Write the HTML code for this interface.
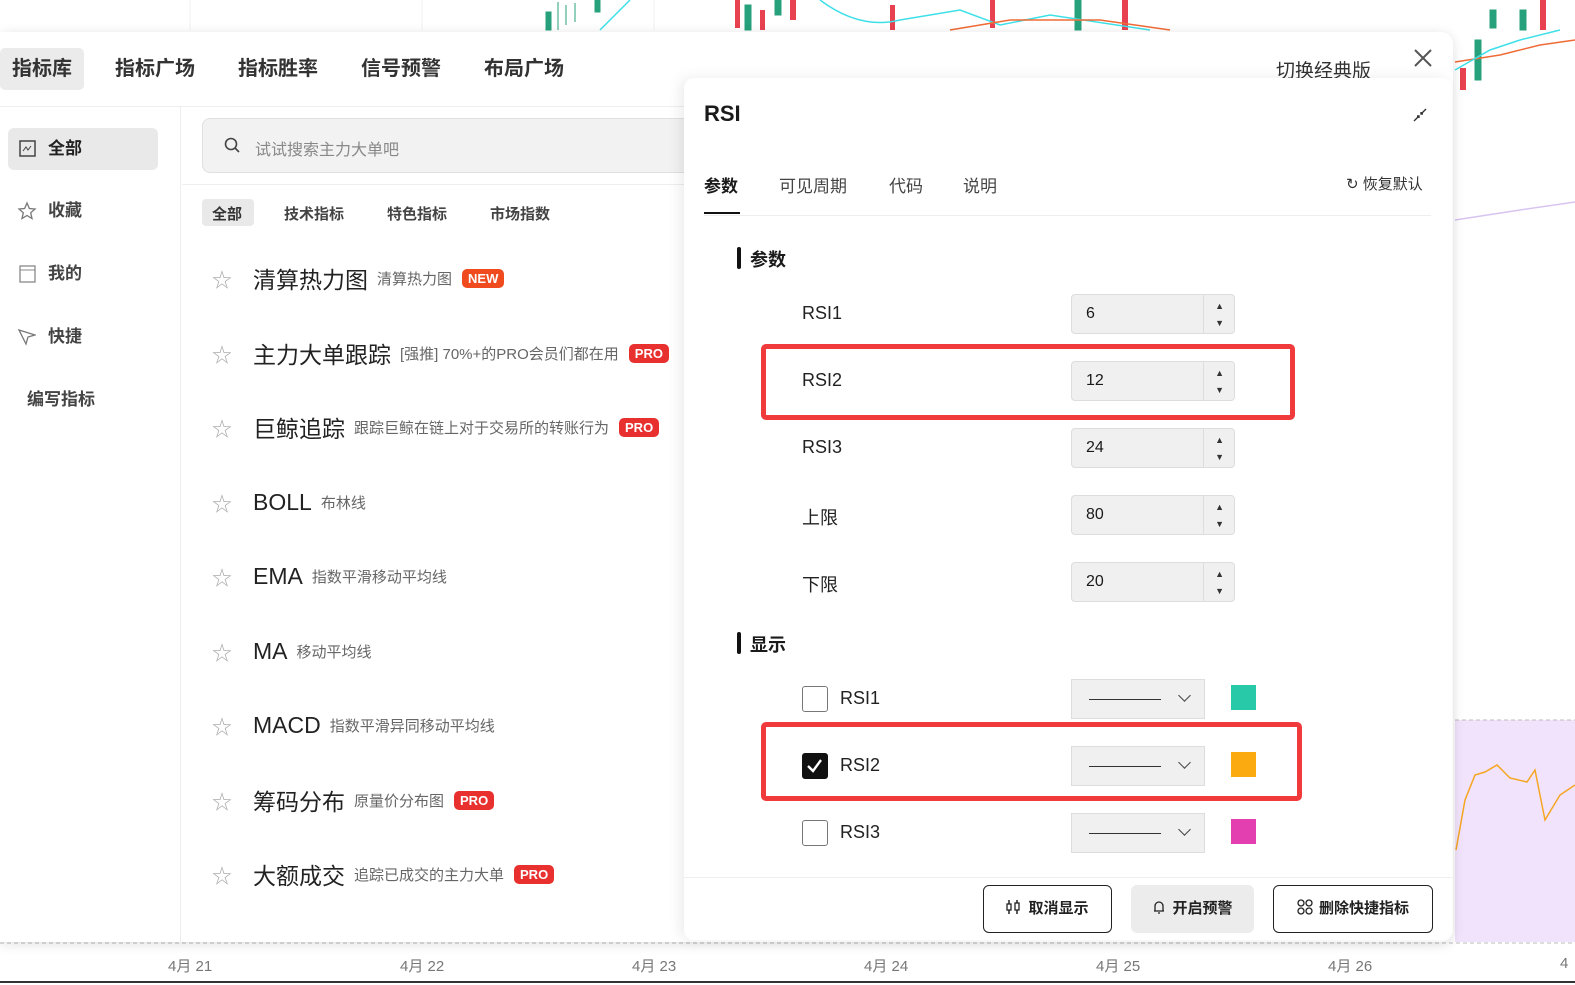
<!DOCTYPE html><html><head><meta charset="utf-8"><style>
*{box-sizing:border-box;margin:0;padding:0}
body{width:1575px;height:985px;overflow:hidden;background:#fff;position:relative;font-family:"Liberation Sans","Noto Sans CJK SC",sans-serif;color:#1a1a1a}
.a{position:absolute}
.tab{position:absolute;top:48px;height:42px;line-height:42px;font-size:20px;font-weight:bold;color:#333}
.side{position:absolute;left:8px;width:150px;height:42px;line-height:42px;font-size:17px;font-weight:bold;color:#444;padding-left:40px}
.row{position:absolute;left:212px;height:40px;display:flex;align-items:center;white-space:nowrap}
.row .st{color:#aaa;font-size:20px;width:41px}
.row .t{font-size:23px;color:#222;margin-right:9px}
.row .d{font-size:15px;color:#666;margin-right:10px}
.pro{background:#e8302f;color:#fff;font-size:13px;font-weight:bold;padding:2px 6px;border-radius:5px}
.lab{position:absolute;left:802px;font-size:18px;color:#222}
.inp{position:absolute;left:1071px;width:164px;height:40px;background:#f0f0f0;border:1px solid #ddd;border-radius:4px;font-size:16px;line-height:38px;padding-left:14px}
.inp:after{content:"";position:absolute;left:131px;top:0;bottom:0;border-left:1px solid #ddd}
.inp i{position:absolute;right:10px;font-style:normal;font-size:9px;color:#333;line-height:10px}
.cb{position:absolute;left:802px;width:26px;height:26px;border:1.5px solid #777;border-radius:3px;background:#fff}
.sel{position:absolute;left:1071px;width:134px;height:40px;background:#f0f0f0;border:1px solid #ddd}
.sel:before{content:"";position:absolute;left:17px;top:19px;width:72px;border-top:1.5px solid #333}
.sel:after{content:"";position:absolute;left:108px;top:11px;width:8px;height:8px;border-right:1.5px solid #444;border-bottom:1.5px solid #444;transform:rotate(45deg)}
.sw{position:absolute;left:1231px;width:25px;height:25px}
.btn{position:absolute;top:885px;height:48px;border:1.5px solid #222;border-radius:6px;font-size:15px;font-weight:bold;line-height:45px;text-align:center;color:#222}
.date{position:absolute;top:955px;font-size:15px;color:#777}
</style></head><body>
<svg class="a" style="left:0;top:0" width="1575" height="985">
<line x1="190" y1="0" x2="190" y2="30" stroke="#f0f0f0"/><line x1="422" y1="0" x2="422" y2="30" stroke="#f0f0f0"/><line x1="654" y1="0" x2="654" y2="30" stroke="#f0f0f0"/>
<g stroke="#26a17b" fill="#26a17b"><rect x="546" y="12" width="5" height="18"/><line x1="558" y1="2" x2="558" y2="30"/><line x1="566" y1="5" x2="566" y2="25"/><line x1="575" y1="3" x2="575" y2="22"/><rect x="595" y="0" width="5" height="12"/><rect x="745" y="5" width="6" height="25"/><rect x="775" y="0" width="6" height="15"/><rect x="1075" y="0" width="6" height="30"/><rect x="1475" y="40" width="6" height="40"/><rect x="1490" y="10" width="6" height="18"/><rect x="1520" y="10" width="6" height="20"/></g>
<g fill="#e84150"><rect x="735" y="0" width="5" height="28"/><rect x="760" y="10" width="5" height="20"/><rect x="790" y="0" width="6" height="20"/><rect x="890" y="5" width="5" height="25"/><rect x="990" y="0" width="5" height="28"/><rect x="1122" y="0" width="6" height="30"/><rect x="1460" y="68" width="6" height="22"/><rect x="1540" y="0" width="6" height="30"/></g>
<path d="M600 30 L630 0 M820 0 Q860 30 900 20 L960 10 L1000 25 L1050 15 L1150 30" stroke="#3ee0e8" fill="none" stroke-width="1.5"/>
<path d="M950 30 L1010 20 L1100 20 L1170 30 M1455 62 L1500 55 L1540 45 L1575 40" stroke="#f06a35" fill="none" stroke-width="1.5"/>
<path d="M1455 70 L1490 50 L1520 40 L1560 30" stroke="#3ee0e8" fill="none" stroke-width="1.5"/>
<path d="M1455 220 L1520 210 L1575 202" stroke="#d8c4f0" fill="none" stroke-width="1.5"/>
<rect x="1455" y="720" width="120" height="222" fill="#f1e3fb"/>
<line x1="1455" y1="720" x2="1575" y2="720" stroke="#bbb" stroke-dasharray="4 3"/>
<line x1="0" y1="943" x2="1575" y2="943" stroke="#bbb" stroke-dasharray="4 3"/>
<path d="M1456 850 L1465 800 L1475 775 L1485 772 L1497 765 L1510 778 L1527 782 L1535 770 L1545 820 L1560 795 L1575 785" stroke="#f5a623" fill="none" stroke-width="1.5"/>
<line x1="0" y1="982" x2="1575" y2="982" stroke="#333" stroke-width="2"/>
</svg>
<div class="date" style="left:168px">4月 21</div><div class="date" style="left:400px">4月 22</div><div class="date" style="left:632px">4月 23</div><div class="date" style="left:864px">4月 24</div><div class="date" style="left:1096px">4月 25</div><div class="date" style="left:1328px">4月 26</div><div class="date" style="left:1560px">4</div>
<div class="a" style="left:0;top:32px;width:1453px;height:910px;background:#fff;border-radius:0 12px 12px 0;box-shadow:0 2px 12px rgba(0,0,0,.12)"></div>
<div class="a" style="left:0;top:48px;width:84px;height:42px;background:#ebebeb;border-radius:5px"></div>
<div class="tab" style="left:12px">指标库</div><div class="tab" style="left:115px">指标广场</div><div class="tab" style="left:238px">指标胜率</div><div class="tab" style="left:361px">信号预警</div><div class="tab" style="left:484px">布局广场</div>
<div class="a" style="left:1276px;top:56px;font-size:19px;color:#333">切换经典版</div>
<svg class="a" style="left:1414px;top:49px" width="18" height="18"><path d="M1 1L17 17M17 1L1 17" stroke="#555" stroke-width="2"/></svg>
<div class="a" style="left:0;top:106px;width:684px;border-top:1px solid #eee"></div>
<div class="a" style="left:180px;top:107px;height:835px;border-left:1px solid #eee"></div>
<div class="side" style="top:128px;background:#e9e9e9;border-radius:6px;color:#222">全部</div>
<svg class="a" style="left:19px;top:140px" width="17" height="17"><rect x="1" y="1" width="15" height="15" fill="none" stroke="#444" stroke-width="1.5"/><path d="M4 11L7 7L9 10L12 6" stroke="#444" fill="none"/></svg>
<div class="side" style="top:190px">收藏</div>
<svg class="a" style="left:17px;top:201px" width="20" height="20"><path d="M10 2L12.4 7.5L18 8L13.7 11.8L15 17.5L10 14.5L5 17.5L6.3 11.8L2 8L7.6 7.5Z" fill="none" stroke="#777" stroke-width="1.3"/></svg>
<div class="side" style="top:253px">我的</div>
<svg class="a" style="left:19px;top:265px" width="17" height="18"><rect x="1" y="1" width="15" height="16" fill="none" stroke="#888" stroke-width="1.3"/><line x1="1" y1="5" x2="16" y2="5" stroke="#888"/></svg>
<div class="side" style="top:316px">快捷</div>
<svg class="a" style="left:18px;top:328px" width="18" height="18"><path d="M1 2L17 7L10 9L8 16Z" fill="none" stroke="#777" stroke-width="1.3"/></svg>
<div class="side" style="top:379px;padding-left:19px">编写指标</div>
<div class="a" style="left:202px;top:118px;width:490px;height:55px;background:#f2f2f2;border:1px solid #e0e0e0;border-radius:8px"></div>
<svg class="a" style="left:224px;top:137px" width="18" height="18"><circle cx="7" cy="7" r="5.5" fill="none" stroke="#444" stroke-width="1.6"/><line x1="11" y1="11" x2="15" y2="15" stroke="#444" stroke-width="1.6"/></svg>
<div class="a" style="left:255px;top:136px;font-size:16px;color:#888">试试搜索主力大单吧</div>
<div class="a" style="left:182px;top:184px;width:510px;border-top:1px solid #eee"></div>
<div class="a" style="left:202px;top:199px;width:52px;height:27px;background:#e9e9e9;border-radius:4px"></div>
<div class="a" style="left:212px;top:203px;font-size:15px;font-weight:bold;color:#333">全部</div>
<div class="a" style="left:284px;top:203px;font-size:15px;font-weight:bold;color:#444">技术指标</div>
<div class="a" style="left:387px;top:203px;font-size:15px;font-weight:bold;color:#444">特色指标</div>
<div class="a" style="left:490px;top:203px;font-size:15px;font-weight:bold;color:#444">市场指数</div>
<div class="row" style="top:258px"><span class="st">☆</span><span class="t">清算热力图</span><span class="d">清算热力图</span><span class="pro" style="background:#f04a1f">NEW</span></div>
<div class="row" style="top:333px"><span class="st">☆</span><span class="t">主力大单跟踪</span><span class="d">[强推] 70%+的PRO会员们都在用</span><span class="pro">PRO</span></div>
<div class="row" style="top:407px"><span class="st">☆</span><span class="t">巨鲸追踪</span><span class="d">跟踪巨鲸在链上对于交易所的转账行为</span><span class="pro">PRO</span></div>
<div class="row" style="top:482px"><span class="st">☆</span><span class="t">BOLL</span><span class="d">布林线</span></div>
<div class="row" style="top:556px"><span class="st">☆</span><span class="t">EMA</span><span class="d">指数平滑移动平均线</span></div>
<div class="row" style="top:631px"><span class="st">☆</span><span class="t">MA</span><span class="d">移动平均线</span></div>
<div class="row" style="top:705px"><span class="st">☆</span><span class="t">MACD</span><span class="d">指数平滑异同移动平均线</span></div>
<div class="row" style="top:780px"><span class="st">☆</span><span class="t">筹码分布</span><span class="d">原量价分布图</span><span class="pro">PRO</span></div>
<div class="row" style="top:854px"><span class="st">☆</span><span class="t">大额成交</span><span class="d">追踪已成交的主力大单</span><span class="pro">PRO</span></div>
<div class="a" style="left:684px;top:78px;width:768px;height:862px;background:#fff;border-radius:10px;box-shadow:-4px 0 14px rgba(0,0,0,.08)"></div>
<div class="a" style="left:704px;top:101px;font-size:22px;font-weight:bold">RSI</div>
<svg class="a" style="left:1413px;top:108px" width="14" height="14"><path d="M1 13L6 8M4 8H6V10M13 1L8 6M8 4V6H10" stroke="#333" stroke-width="1.4" fill="none"/></svg>
<div class="a" style="left:704px;top:172px;font-size:17px;font-weight:bold">参数</div>
<div class="a" style="left:704px;top:212px;width:36px;border-top:2px solid #111"></div>
<div class="a" style="left:779px;top:172px;font-size:17px;color:#444">可见周期</div>
<div class="a" style="left:889px;top:172px;font-size:17px;color:#444">代码</div>
<div class="a" style="left:963px;top:172px;font-size:17px;color:#444">说明</div>
<div class="a" style="left:1346px;top:173px;font-size:15px;color:#333">↻ 恢复默认</div>
<div class="a" style="left:704px;top:215px;width:727px;border-top:1px solid #eee"></div>
<div class="a" style="left:737px;top:247px;width:4px;height:22px;background:#111;border-radius:2px"></div>
<div class="a" style="left:750px;top:246px;font-size:18px;font-weight:bold">参数</div>
<div class="lab" style="top:303px">RSI1</div><div class="inp" style="top:294px">6<i style="top:6px">▲</i><i style="top:23px">▼</i></div>
<div class="lab" style="top:370px">RSI2</div><div class="inp" style="top:361px">12<i style="top:6px">▲</i><i style="top:23px">▼</i></div>
<div class="lab" style="top:437px">RSI3</div><div class="inp" style="top:428px">24<i style="top:6px">▲</i><i style="top:23px">▼</i></div>
<div class="lab" style="top:504px">上限</div><div class="inp" style="top:495px">80<i style="top:6px">▲</i><i style="top:23px">▼</i></div>
<div class="lab" style="top:571px">下限</div><div class="inp" style="top:562px">20<i style="top:6px">▲</i><i style="top:23px">▼</i></div>
<div class="a" style="left:761px;top:344px;width:534px;height:76px;border:5px solid #f03a3c;border-radius:5px"></div>
<div class="a" style="left:737px;top:632px;width:4px;height:22px;background:#111;border-radius:2px"></div>
<div class="a" style="left:750px;top:631px;font-size:18px;font-weight:bold">显示</div>
<div class="cb" style="top:686px"></div><div class="lab" style="left:840px;top:688px">RSI1</div><div class="sel" style="top:679px"></div><div class="sw" style="top:685px;background:#27c9a8"></div>
<div class="cb" style="top:753px;background:#111;border-color:#111"><svg width="23" height="23"><path d="M5 12L10 17L18 6" stroke="#fff" stroke-width="2.4" fill="none"/></svg></div><div class="lab" style="left:840px;top:755px">RSI2</div><div class="sel" style="top:746px"></div><div class="sw" style="top:752px;background:#fbaa10"></div>
<div class="cb" style="top:820px"></div><div class="lab" style="left:840px;top:822px">RSI3</div><div class="sel" style="top:813px"></div><div class="sw" style="top:819px;background:#e43fb1"></div>
<div class="a" style="left:761px;top:722px;width:541px;height:79px;border:5px solid #f03a3c;border-radius:5px"></div>
<div class="a" style="left:684px;top:877px;width:768px;border-top:1px solid #eee"></div>
<div class="btn" style="left:983px;width:129px"><svg width="16" height="16" style="vertical-align:-2px;margin-right:6px"><path d="M3 1V15M11 1V15" stroke="#222" stroke-width="1.5"/><rect x="1" y="5" width="4" height="6" fill="#fff" stroke="#222" stroke-width="1.3"/><rect x="9" y="4" width="4" height="7" fill="#fff" stroke="#222" stroke-width="1.3"/></svg>取消显示</div>
<div class="btn" style="left:1131px;width:123px;background:#ececec;border-color:#ececec"><svg width="14" height="16" style="vertical-align:-2px;margin-right:6px"><path d="M3 12V7A4 4 0 0 1 11 7V12ZM2 12H12M6 14H8" stroke="#222" stroke-width="1.3" fill="none"/></svg>开启预警</div>
<div class="btn" style="left:1273px;width:160px"><svg width="16" height="16" style="vertical-align:-2px;margin-right:6px"><circle cx="4" cy="4" r="3" fill="none" stroke="#222" stroke-width="1.3"/><circle cx="12" cy="4" r="3" fill="none" stroke="#222" stroke-width="1.3"/><circle cx="4" cy="12" r="3" fill="none" stroke="#222" stroke-width="1.3"/><circle cx="12" cy="12" r="3" fill="none" stroke="#222" stroke-width="1.3"/></svg>删除快捷指标</div>
</body></html>
